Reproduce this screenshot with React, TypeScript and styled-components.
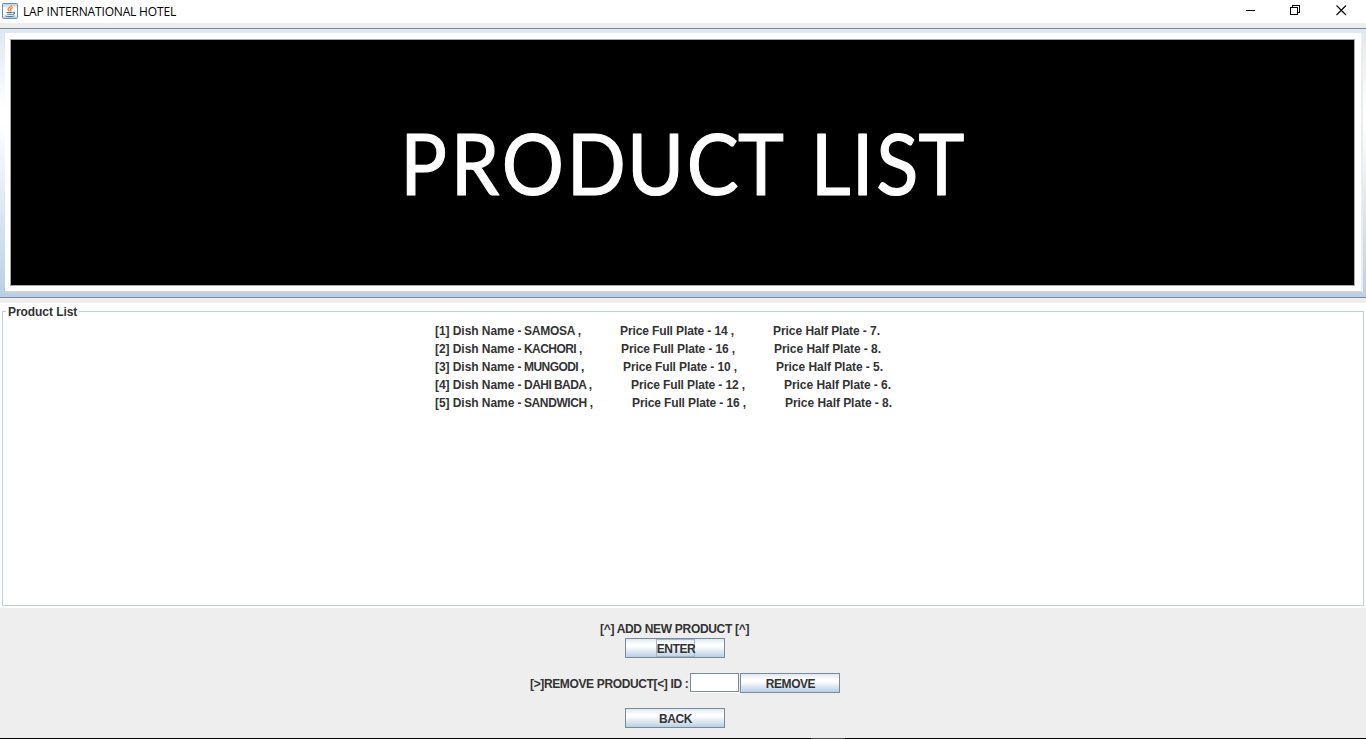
import React from "react";
import styled, { createGlobalStyle } from "styled-components";

const Global = createGlobalStyle`
  * { box-sizing: border-box; }
  body { margin: 0; background: #eee; overflow: hidden; }
`;

const Window = styled.div`
  width: 1366px;
  height: 739px;
  display: flex;
  flex-direction: column;
  background: #eeeeee;
  border-bottom: 1px solid #000;
  color: #333333;
  font: bold 12px/18px "Liberation Sans", Arial, sans-serif;
  white-space: pre;
`;

const TitleBar = styled.header`
  height: 23px;
  flex: none;
  display: flex;
  align-items: center;
  background: #fff;
  padding-left: 2px;
`;

const Title = styled.span<{ $spacing: number }>`
  flex: 1;
  margin-left: 5px;
  color: #000;
  font: 12px/22px "Open Sans", "Noto Sans", sans-serif;
  letter-spacing: ${(p) => p.$spacing}px;
`;

const Banner = styled.button`
  flex: none;
  display: block;
  width: 1366px;
  height: 270px;
  margin: 5px 0;
  padding: 4px 3px 4px 5px;
  border: solid #7a8a99;
  border-width: 1px 0;
  background: linear-gradient(#dde8f3 0%, #ffffff 30%, #ffffff 35%, #b8cfe5 100%);
`;

const Picture = styled.div`
  width: 1358px;
  height: 260px;
  padding: 6px 5px;
  background: #fff;
  border-bottom: 2px solid #d2d2d2;
  border-right: 2px solid #ececec;
`;

const Board = styled.svg`
  display: block;
  width: 1345px;
  height: 247px;
  border: 1px solid #a8a8a8;
  background: #000;
`;

const ListPanel = styled.main`
  flex: none;
  height: 305px;
  padding: 0 2px 2px;
  background: #fff;
`;

const Group = styled.fieldset`
  height: 303px;
  margin: 0;
  padding: 2px 0 0;
  border: 1px solid #b8cfe5;
`;

const Legend = styled.legend`
  height: 17px;
  margin-left: 3px;
  padding: 0 2px;
  letter-spacing: -0.06px;
`;

const DishList = styled.div`
  padding-left: 432px;
`;

const Dish = styled.div`
  display: flex;
  height: 18px;
`;

const Cell = styled.span<{ $w: number; $spacing?: number }>`
  flex: none;
  width: ${(p) => p.$w}px;
  letter-spacing: ${(p) => p.$spacing ?? 0}px;
`;

const Controls = styled.section`
  flex: none;
  height: 131px;
  margin-bottom: -1px;
  display: flex;
  flex-direction: column;
  padding: 12px 0 0 530px;
`;

const Caption = styled.div`
  padding-left: 70px;
  height: 18px;
  letter-spacing: -0.31px;
`;

const Row = styled.div<{ $indent?: number }>`
  flex: none;
  display: flex;
  height: 20px;
  padding-left: ${(p) => p.$indent ?? 0}px;
  & + & { margin-top: 15px; }
`;

const FieldLabel = styled.label`
  width: 160px;
  line-height: 22px;
  letter-spacing: -0.36px;
`;

const Field = styled.input`
  width: 49px;
  height: 19px;
  margin-right: 1px;
  padding: 0 2px;
  border: 1px solid #7a8a99;
  outline: none;
  background: #fff;
  box-shadow: 0 1px #fff;
  font: 12px "Liberation Sans", sans-serif;
`;

const Button = styled.button`
  width: 100px;
  height: 20px;
  display: flex;
  justify-content: center;
  align-items: center;
  padding: 1px 0 0 1px;
  border: 1px solid #7a8a99;
  border-radius: 0;
  background: linear-gradient(#dde8f3 0%, #ffffff 30%, #ffffff 40%, #b8cfe5 100%);
  color: #333;
  font: bold 12px/18px "Liberation Sans", Arial, sans-serif;
  letter-spacing: -0.45px;
`;

const Focused = styled.span`
  height: 18px;
  width: 39px;
  margin-top: -1px;
  padding-left: 1px;
  line-height: 18px;
  border: 1px solid #a3b8cc;
  display: flex;
  justify-content: center;
`;

const WindowButtons = styled.svg`
  width: 120px;
  height: 22px;
  margin-bottom: 1px;
`;

const TaskEdge = styled.div`
  width: 34px;
  height: 1px;
  flex: none;
  margin: auto 0 0 281px;
  background: #444;
`;

const IconTile = styled.svg`
  margin-top: -1px;
`;

const JavaIcon = () => (
  <IconTile width="16" height="16" viewBox="0 0 16 16">
    <defs>
      <linearGradient id="tile" x1="0" y1="0" x2="0" y2="1">
        <stop offset="0" stopColor="#b7cad8" />
        <stop offset=".35" stopColor="#fff" />
        <stop offset=".75" stopColor="#f4f7fa" />
        <stop offset="1" stopColor="#b4c6d6" />
      </linearGradient>
    </defs>
    <rect x=".5" y=".5" width="15" height="15" rx="1" fill="url(#tile)" stroke="#688fac" />
    <path d="M9.7 2.2C9.6 4 5.8 4.6 6 6.3c.1.9 1.2 1.2 1.3 2.1M10.8 4.7C9 5.2 7.8 6 8.6 7c.5.7.3 1.1-.3 1.6" fill="none" stroke="#ee8130" strokeWidth="1.3" />
    <path d="M4.5 9.5h6M5.2 11.2h4.8M10.8 9.3c2.7-.4 2.1 2-.4 2.3M3.3 12.9c1 .9 7.5.9 9 0" fill="none" stroke="#47799e" strokeWidth="1.1" />
  </IconTile>
);

const GLYPHS: [string, number][] = [
  ["P", 407.5], ["R", 458], ["O", 505.5], ["D", 574], ["U", 633.5], ["C", 690.5],
  ["T", 739], ["L", 818], ["I", 859], ["S", 879], ["T", 919.5],
];
const BEARING: Record<string, number> = { P: 8, R: 8, O: 4, D: 8, U: 7, C: 4, T: 1, L: 8, I: 8, S: 3 };
const SCALE = 0.92;

const DISHES = [
  { id: 1, name: "SAMOSA", full: 14, half: 7, width: 96, spacing: -0.25 },
  { id: 2, name: "KACHORI", full: 16, half: 8, width: 97, spacing: -0.55 },
  { id: 3, name: "MUNGODI", full: 10, half: 5, width: 99, spacing: -0.55 },
  { id: 4, name: "DAHI BADA", full: 12, half: 6, width: 107, spacing: -0.54 },
  { id: 5, name: "SANDWICH", full: 16, half: 8, width: 108, spacing: -0.4 },
];

export default function App() {
  return (
    <Window>
      <Global />
      <TitleBar>
        <JavaIcon />
        <Title $spacing={-0.17}>LAP INTERNATIONAL HOTEL</Title>
        <WindowButtons viewBox="1246 0 120 22" fill="none" stroke="#000" shapeRendering="crispEdges">
          <path d="M1245 10.5h10M1290.5 7.5h7v7h-7zM1292.5 7V5.5h7v7H1298" />
          <path d="M1336.5 5.5l9.5 9.5M1346 5.5l-9.5 9.5" shapeRendering="auto" strokeWidth="1.1" />
        </WindowButtons>
      </TitleBar>
      <Banner>
        <Picture>
          <Board viewBox="11 40 1343 245">
            <text y="195" fill="#fff" stroke="#fff" strokeWidth="1.2" strokeLinejoin="round" fontFamily="Lato" fontWeight="400" fontSize="84.5" transform={`scale(${SCALE} 1)`}
              x={GLYPHS.map(([g, x]) => x / SCALE - BEARING[g]).join(" ")}>
              {GLYPHS.map(([g]) => g).join("")}
            </text>
          </Board>
        </Picture>
      </Banner>
      <ListPanel>
        <Group>
          <Legend>Product List</Legend>
          <DishList>
            {DISHES.map((d) => (
              <Dish key={d.id}>
                <Cell $w={89} $spacing={-0.06}>{`[${d.id}] Dish Name - `}</Cell>
                <Cell $w={d.width} $spacing={d.spacing}>{`${d.name} ,`}</Cell>
                <Cell $w={153} $spacing={-0.12}>{`Price Full Plate - ${d.full} ,`}</Cell>
                <Cell $w={120} $spacing={-0.05}>{`Price Half Plate - ${d.half}.`}</Cell>
              </Dish>
            ))}
          </DishList>
        </Group>
      </ListPanel>
      <Controls>
        <Caption>[^] ADD NEW PRODUCT [^]</Caption>
        <Row $indent={95}><Button><Focused>ENTER</Focused></Button></Row>
        <Row>
          <FieldLabel>{"[>]REMOVE PRODUCT[<] ID :"}</FieldLabel>
          <Field />
          <Button>REMOVE</Button>
        </Row>
        <Row $indent={95}><Button>BACK</Button></Row>
        <TaskEdge />
      </Controls>
    </Window>
  );
}
